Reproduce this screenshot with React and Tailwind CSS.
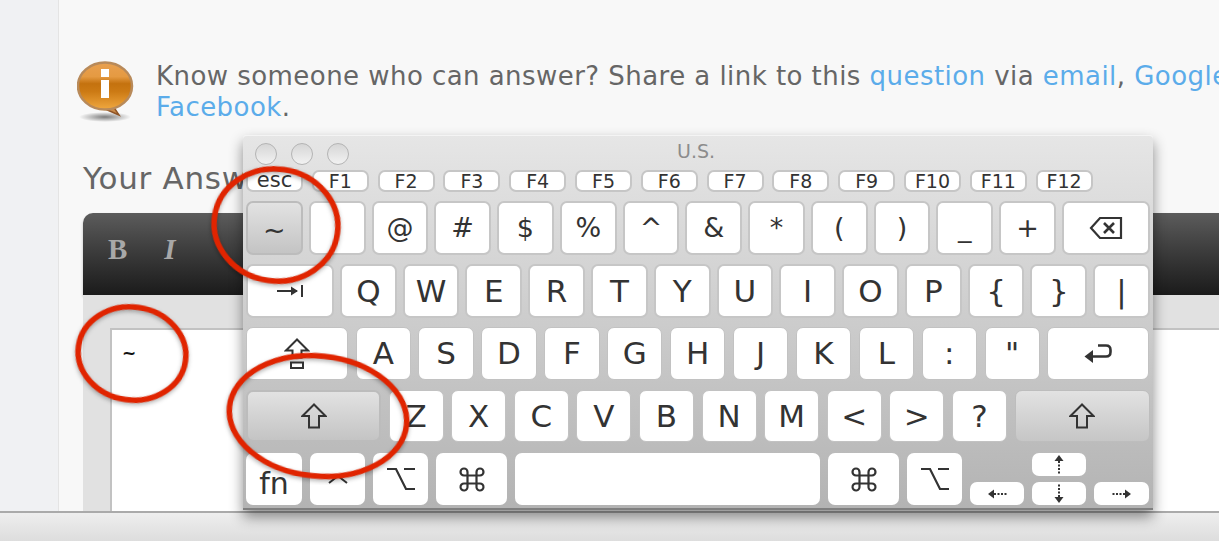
const sans = "font-['DejaVu_Sans',sans-serif]";

// svg key glyphs, sized in real pixels
const DeleteIcon = () => (
  <svg width="34" height="24" viewBox="0 0 34 24" fill="none" stroke="#333" strokeWidth="2.2">
    <path d="M32 2H11L2 12l9 10h21z" />
    <path d="M15 7l10 10M25 7L15 17" strokeWidth="2.6" />
  </svg>
);
const TabIcon = () => (
  <svg width="28" height="14" viewBox="0 0 28 14" fill="none" stroke="#333" strokeWidth="2">
    <path d="M1 7h20" />
    <path d="M15 2.5L22 7l-7 4.5z" fill="#333" stroke="none" />
    <path d="M26 1v12" />
  </svg>
);
const CapsIcon = () => (
  <svg width="26" height="31" viewBox="0 0 26 31" fill="none" stroke="#333" strokeWidth="2">
    <path d="M13 1.5L2 12.5h6.5v7h9v-7H24z" />
    <path d="M7 24.5h12v5.5H7z" />
  </svg>
);
const ShiftIcon = () => (
  <svg width="26" height="26" viewBox="0 0 26 26" fill="none" stroke="#333" strokeWidth="2">
    <path d="M13 1.5L1.5 13H8v11.5h10V13h6.500z" />
  </svg>
);
const ReturnIcon = () => (
  <svg width="28" height="20" viewBox="0 0 28 20" fill="none" stroke="#333" strokeWidth="2.6">
    <path d="M14 1.500h8q4.500 0 4.500 4.500v2q0 4.500-4.500 4.500H6" />
    <path d="M9 6L0.500 12.500 9 19z" fill="#333" stroke="none" />
  </svg>
);
const OptionIcon = () => (
  <svg width="28" height="24" viewBox="0 0 28 24" fill="none" stroke="#333" strokeWidth="2.2">
    <path d="M0 2h9l10 20h9M17 2h11" />
  </svg>
);
const CmdIcon = () => (
  <svg width="26" height="25" viewBox="0 0 26 25" fill="none" stroke="#333" strokeWidth="2.2">
    <path d="M8.500 8.500h9v8h-9zM8.500 8.500V5a3.500 3.500 0 1 0-3.500 3.500h16A3.500 3.500 0 1 0 17.500 5v14.500a3.500 3.500 0 1 0 3.500-3h-16a3.500 3.500 0 1 0 3.500 3z" />
  </svg>
);
const CtrlIcon = () => (
  <svg width="20" height="10" viewBox="0 0 20 10" fill="none" stroke="#333" strokeWidth="2">
    <path d="M1 9l9-7 9 7" />
  </svg>
);
const ArrowV = ({ down }) => (
  <svg width="10" height="19" viewBox="0 0 10 19" className={down ? "rotate-180" : ""}>
    <path d="M5 0l4.500 6h-9z" fill="#333" />
    <path d="M5 6v13" stroke="#333" strokeWidth="2" strokeDasharray="2 1.500" />
  </svg>
);
const ArrowH = ({ right }) => (
  <svg width="19" height="10" viewBox="0 0 19 10" className={right ? "rotate-180" : ""}>
    <path d="M0 5l6-4.500v9z" fill="#333" />
    <path d="M6 5h13" stroke="#333" strokeWidth="2" strokeDasharray="2 1.500" />
  </svg>
);

const InfoBubble = () => (
  <svg width="60" height="66" viewBox="0 0 60 66">
    <defs>
      <linearGradient id="orange" x1="0" y1="0" x2="0" y2="1">
        <stop offset="0" stopColor="#e8a050" />
        <stop offset="0.3" stopColor="#e59a42" />
        <stop offset="0.45" stopColor="#c4720f" />
        <stop offset="0.62" stopColor="#cc7a14" />
        <stop offset="1" stopColor="#f0a840" />
      </linearGradient>
      <radialGradient id="drop">
        <stop offset="0" stopColor="#000" stopOpacity="0.5" />
        <stop offset="1" stopColor="#000" stopOpacity="0" />
      </radialGradient>
    </defs>
    <ellipse cx="28" cy="57" rx="26" ry="5" fill="url(#drop)" />
    <path d="M36 46l6 9-14-6z" fill="#c98a4a" stroke="#8f5426" strokeWidth="1.500" />
    <ellipse cx="28" cy="26" rx="27" ry="23.500" fill="url(#orange)" stroke="#b88a5a" strokeWidth="2.500" />
    <rect x="24" y="9" width="8" height="8" fill="#fff" />
    <rect x="24" y="20" width="8" height="18" fill="#fff" />
  </svg>
);

const fnKeys = ["F1", "F2", "F3", "F4", "F5", "F6", "F7", "F8", "F9", "F10", "F11", "F12"];
const numKeys = ["@", "#", "$", "%", "^", "&", "*", "(", ")", "_", "+"];
const qKeys = ["Q", "W", "E", "R", "T", "Y", "U", "I", "O", "P", "{", "}", "|"];
const aKeys = ["A", "S", "D", "F", "G", "H", "J", "K", "L", ":", '"'];
const zKeys = ["Z", "X", "C", "V", "B", "N", "M", "<", ">", "?"];

const keyBase = "flex items-center justify-center rounded-[7px] bg-white text-[#333]";
const borderTop = "border-2 border-[#c6c6c6]";
const borderLow = "border border-[#c2c2c2]";
const pressed = "flex items-center justify-center rounded-[7px] text-[#333] border-2 border-[#bcbcbc] bg-gradient-to-b from-[#e2e2e2] to-[#c4c4c4]";

const Light = () => (
  <div className="h-[22px] w-[22px] rounded-full border border-[#b4b4b4] bg-gradient-to-b from-[#d6d6d6] to-[#f2f2f2]" />
);

const Keyboard = () => (
  <div className={`absolute left-[243px] top-[135px] h-[375px] w-[910px] rounded-t-[4px] border-t border-[#f4f4f4] border-b-2 border-b-[#7f7f7f] bg-gradient-to-b from-[#e6e6e6] to-[#b3b3b3] px-[3px] shadow-[0_7px_14px_rgba(0,0,0,0.45)] ${sans}`}>
    <div className="relative flex h-[34px] items-center gap-[14px] pl-[9px] pt-[1px]">
      <Light />
      <Light />
      <Light />
      <span className="absolute left-[431px] top-[3px] text-[19px] leading-[24px] text-[#8c8c8c]">U.S.</span>
    </div>

    <div className="flex flex-col">
      {/* function row */}
      <div className="flex h-[22px] gap-[8.800px]">
        <div className={`${keyBase} ${borderTop} w-[57px] pb-[2px] text-[21px] leading-none`}>esc</div>
        {fnKeys.map((k) => (
          <div key={k} className={`${keyBase} ${borderTop} w-[57px] text-[19px] leading-none`}>{k}</div>
        ))}
      </div>

      {/* number row */}
      <div className="mt-[9px] flex h-[54px] gap-[6px]">
        <div className={`${pressed} w-[56.800px] pt-[5px] text-[27px]`}>~</div>
        <div className={`${keyBase} ${borderTop} w-[56.800px]`} />
        {numKeys.map((k) => (
          <div key={k} className={`${keyBase} ${borderTop} w-[56.800px] text-[27px]`}>{k}</div>
        ))}
        <div className={`${keyBase} ${borderTop} w-[88px]`}><DeleteIcon /></div>
      </div>

      {/* qwerty row */}
      <div className="mt-[9px] flex h-[54px] gap-[6px]">
        <div className={`${keyBase} ${borderTop} w-[88px]`}><TabIcon /></div>
        {qKeys.map((k) => (
          <div key={k} className={`${keyBase} ${borderTop} w-[56.800px] text-[31px]`}>{k}</div>
        ))}
      </div>

      {/* home row */}
      <div className="mt-[9px] flex h-[53px] gap-[7.600px]">
        <div className={`${keyBase} ${borderLow} w-[102px]`}><CapsIcon /></div>
        {aKeys.map((k) => (
          <div key={k} className={`${keyBase} ${borderLow} w-[55.300px] text-[31px]`}>{k}</div>
        ))}
        <div className={`${keyBase} ${borderLow} w-[102px]`}><ReturnIcon /></div>
      </div>

      {/* shift row */}
      <div className="mt-[10px] flex h-[52px] gap-[7.600px]">
        <div className={`${pressed} w-[135px]`}><ShiftIcon /></div>
        {zKeys.map((k) => (
          <div key={k} className={`${keyBase} ${borderLow} w-[55px] text-[31px]`}>{k}</div>
        ))}
        <div className="flex w-[135px] items-center justify-center rounded-[7px] border border-[#bdbdbd] bg-gradient-to-b from-[#e2e2e2] to-[#c6c6c6]"><ShiftIcon /></div>
      </div>

      {/* bottom row */}
      <div className="mt-[11px] flex h-[52px] gap-[8px]">
        <div className={`${keyBase} w-[56px] pt-[8px] text-[30px]`}>fn</div>
        <div className={`${keyBase} w-[55px]`}><CtrlIcon /></div>
        <div className={`${keyBase} w-[55px]`}><OptionIcon /></div>
        <div className={`${keyBase} w-[71px]`}><CmdIcon /></div>
        <div className={`${keyBase} w-[305px]`} />
        <div className={`${keyBase} w-[71px]`}><CmdIcon /></div>
        <div className={`${keyBase} w-[55px]`}><OptionIcon /></div>
        <div className={`${keyBase} mt-[29px] h-[23px] w-[54px]`}><ArrowH /></div>
        <div className="flex w-[54px] flex-col justify-between">
          <div className={`${keyBase} h-[23px]`}><ArrowV /></div>
          <div className={`${keyBase} h-[23px]`}><ArrowV down /></div>
        </div>
        <div className={`${keyBase} mt-[29px] h-[23px] w-[55px]`}><ArrowH right /></div>
      </div>
    </div>
  </div>
);

// hand drawn red rings on top of the screenshot
const Ring = ({ className, w, h, rotate }) => (
  <svg width={w + 12} height={h + 12} viewBox={`0 0 ${w + 12} ${h + 12}`} className={`absolute ${className}`}>
    <ellipse
      cx={(w + 12) / 2}
      cy={(h + 12) / 2}
      rx={w / 2 - 3}
      ry={h / 2 - 3}
      transform={`rotate(${rotate} ${(w + 12) / 2} ${(h + 12) / 2})`}
      fill="none"
      stroke="#e02400"
      strokeWidth="5.500"
      style={{ filter: "drop-shadow(0 2px 2px rgba(0,0,0,0.3))" }}
    />
  </svg>
);

export default function App() {
  return (
    <div className={`relative flex h-[541px] w-[1219px] flex-col overflow-hidden bg-[#f8f8f8] ${sans}`}>
      <div className="flex h-[511px] overflow-hidden">
        <div className="w-[59px] shrink-0 border-r border-[#e4e4e4] bg-[#f0f1f3]" />
        <div className="flex min-w-0 flex-1 flex-col">
          <div className="flex h-[160px] pl-[18px] pt-[60px]">
            <div className="w-[79px] shrink-0"><InfoBubble /></div>
            <p className="mt-[1px] whitespace-nowrap text-[26px] leading-[31px] tracking-[0.45px] text-[#666]">
              Know someone who can answer? Share a link to this <span className="text-[#5bacea]">question</span> via <span className="text-[#5bacea]">email</span>, <span className="text-[#5bacea]">Google+</span>
              <br />
              <span className="text-[#5bacea]">Facebook</span>.
            </p>
          </div>
          <h2 className="ml-[24px] text-[31px] font-normal leading-[36px] tracking-[0.7px] text-[#666]">Your Answer</h2>
          <div className="ml-[24px] mt-[17px] flex min-h-0 flex-1 flex-col">
            <div className="flex h-[82px] shrink-0 items-center gap-[37px] rounded-tl-[10px] bg-gradient-to-b from-[#5c5c5c] to-[#1b1b1b] pb-[9px] pl-[25px] font-['Liberation_Serif',serif] text-[29px] font-bold text-[#a8a8a8] shadow-[0_2px_3px_rgba(0,0,0,0.25)]">
              <span>B</span>
              <span className="italic">I</span>
            </div>
            <div className="min-h-0 flex-1 bg-[#e1e1e1] pl-[27px] pt-[33px]">
              <div className="h-full border-l-2 border-t-2 border-[#c2c2c2] bg-white pl-[10px] pt-[11px] text-[17px] font-bold leading-[24px] text-[#111]">~</div>
            </div>
          </div>
        </div>
      </div>
      <div className="min-h-0 flex-1 border-t-2 border-[#aaaaaa] bg-gradient-to-b from-[#eeeeee] to-[#dddddd]" />

      <Keyboard />

      <Ring className="left-[205px] top-[159.500px]" w={130} h={118} rotate={8} />
      <Ring className="left-[68.500px] top-[298px]" w={114} h={99} rotate={8} />
      <Ring className="left-[219.500px] top-[347px]" w={184} h={126} rotate={6} />
    </div>
  );
}
